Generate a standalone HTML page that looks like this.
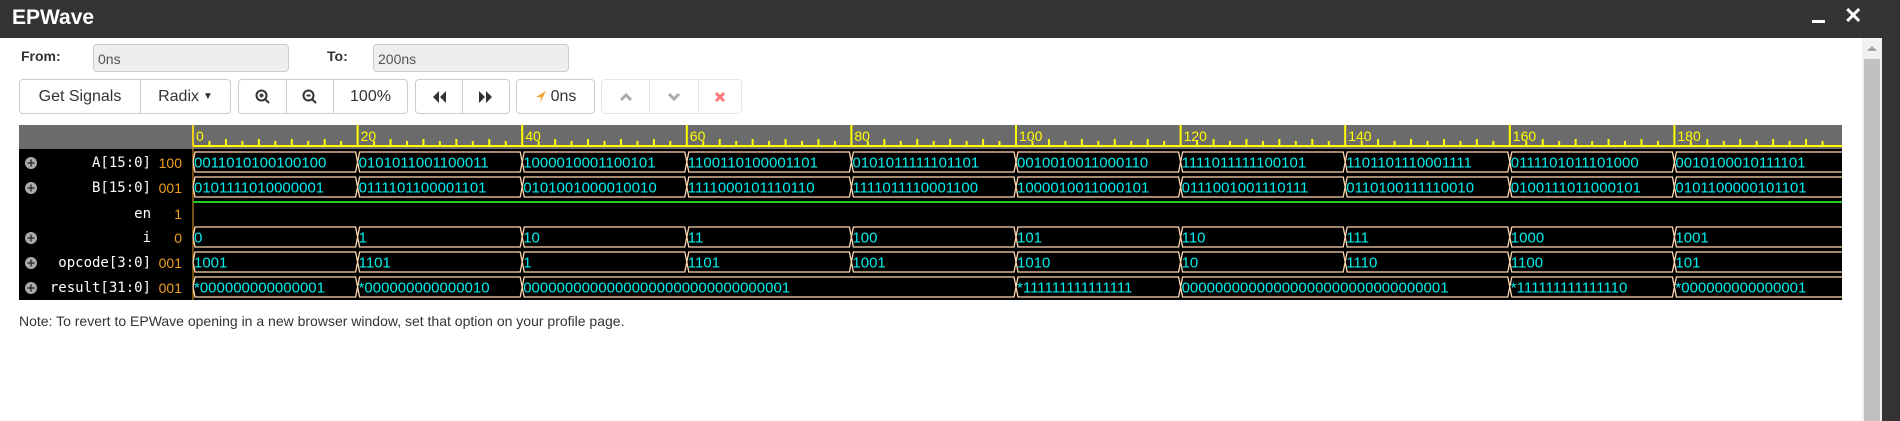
<!DOCTYPE html>
<html><head><meta charset="utf-8"><style>
*{box-sizing:border-box;margin:0;padding:0}
body{width:1900px;height:421px;background:#fff;font-family:"Liberation Sans",Arial,sans-serif;position:relative;overflow:hidden;color:#333}
.title{position:absolute;left:0;top:0;width:1900px;height:38px;background:#333}
.title span{position:absolute;left:12px;top:6px;color:#fff;font-weight:bold;font-size:21px}
.rb{position:absolute;left:1882px;top:0;width:18px;height:421px;background:#333}
.sb{position:absolute;left:1862px;top:38px;width:20px;height:383px;background:#f1f1f1}
.thumb{position:absolute;left:1864px;top:59px;width:16px;height:362px;background:#c1c1c1}
.lbl{position:absolute;font-weight:bold;font-size:14px;color:#333;top:48px}
.inp{position:absolute;top:44px;height:28px;width:196px;background:#eee;border:1px solid #ccc;border-radius:4px;font-size:14px;color:#555;padding:6px 0 0 4px}
.grp{position:absolute;top:79px;height:35px;border:1px solid #ccc;border-radius:4px;display:flex;background:#fff}
.grp div{height:33px;border-right:1px solid #ccc;display:flex;align-items:center;justify-content:center;font-size:16px;color:#333}
.grp div:last-child{border-right:none}
.grp.dis{border-color:#e6e6e6}.grp.dis div{border-color:#e6e6e6}
.note{position:absolute;left:19px;top:313px;font-size:14px;color:#333}
</style></head><body>
<div class="title"><span>EPWave</span>
<div style="position:absolute;left:1812px;top:20px;width:13px;height:3px;background:#fff"></div>
<div style="position:absolute;left:1844px;top:3px;color:#fff;font-size:22px;font-weight:bold">✕</div>
</div>
<div class="rb"></div><div class="sb"></div><div class="thumb"></div>
<div style="position:absolute;left:1867px;top:46px;width:0;height:0;border-left:5px solid transparent;border-right:5px solid transparent;border-bottom:5px solid #a3a3a3"></div>
<div class="lbl" style="left:21px">From:</div>
<div class="inp" style="left:93px">0ns</div>
<div class="lbl" style="left:327px">To:</div>
<div class="inp" style="left:373px">200ns</div>
<div class="grp" style="left:19px;width:212px"><div style="width:121px">Get Signals</div><div style="width:89px">Radix <span style="font-size:10px;margin-left:4px">▼</span></div></div>
<div class="grp" style="left:238px;width:170px">
<div style="width:48px"><svg width="16" height="16" viewBox="0 0 16 16"><circle cx="6.5" cy="6.5" r="5" fill="none" stroke="#333" stroke-width="2"/><path d="M10 10l4 4M4.5 6.5h4M6.5 4.5v4" stroke="#333" stroke-width="2"/></svg></div>
<div style="width:47px"><svg width="16" height="16" viewBox="0 0 16 16"><circle cx="6.5" cy="6.5" r="5" fill="none" stroke="#333" stroke-width="2"/><path d="M10 10l4 4M4.5 6.5h4" stroke="#333" stroke-width="2"/></svg></div>
<div style="width:73px">100%</div></div>
<div class="grp" style="left:415px;width:95px">
<div style="width:47px"><svg width="16" height="14" viewBox="0 0 16 14"><path d="M8 1L2 7l6 6zM15 1L9 7l6 6z" fill="#333"/></svg></div>
<div style="width:46px"><svg width="16" height="14" viewBox="0 0 16 14"><path d="M1 1l6 6-6 6zM8 1l6 6-6 6z" fill="#333"/></svg></div></div>
<div class="grp" style="left:516px;width:79px"><div style="width:77px"><svg width="12" height="14" viewBox="0 0 12 14" style="margin-right:4px"><path d="M11 1L1 7h5l-1 6z" fill="#f0a030"/></svg>0ns</div></div>
<div class="grp dis" style="left:601px;width:141px">
<div style="width:48px"><svg width="14" height="10" viewBox="0 0 14 10"><path d="M2 8l5-5 5 5" fill="none" stroke="#aaa" stroke-width="3"/></svg></div>
<div style="width:49px"><svg width="14" height="10" viewBox="0 0 14 10"><path d="M2 2l5 5 5-5" fill="none" stroke="#aaa" stroke-width="3"/></svg></div>
<div style="width:42px"><svg width="12" height="12" viewBox="0 0 12 12"><path d="M2 2l8 8M10 2l-8 8" stroke="#f77" stroke-width="3"/></svg></div></div>

<svg style="position:absolute;left:0;top:0" width="1900" height="421">
<defs><clipPath id="cp"><rect x="19" y="120" width="1823" height="185"/></clipPath></defs>
<rect x="19" y="125" width="1823" height="24" fill="#6b6b6b"/>
<rect x="19" y="149" width="1823" height="151" fill="#000"/>
<g clip-path="url(#cp)">
<line x1="193" y1="146" x2="1842" y2="146" stroke="#ff0" stroke-width="2"/>
<g stroke="#ff0" stroke-width="2" id="ticks"></g>
<g fill="#ff0" font-size="14" font-family="Liberation Sans" id="nums"></g>
<line x1="193" y1="125" x2="193" y2="300" stroke="#e8a030" stroke-width="1"/>
<line x1="193" y1="202" x2="1842" y2="202" stroke="#2c2" stroke-width="2"/>
<g id="bars" fill="#000" stroke="#ffd8b0" stroke-width="1.3"></g>
<g id="txt" fill="#0ee" font-size="15" font-family="Liberation Sans"></g>
</g>
<g font-family="DejaVu Sans Mono" font-size="14" fill="#fff" text-anchor="end">
<text x="151" y="167">A[15:0]</text><text x="151" y="192">B[15:0]</text><text x="151" y="218">en</text><text x="151" y="242">i</text><text x="151" y="267">opcode[3:0]</text><text x="151" y="292">result[31:0]</text></g>
<g font-family="Liberation Sans" font-size="14" fill="#f0a020" text-anchor="end">
<text x="182" y="168">100</text><text x="182" y="193">001</text><text x="182" y="219">1</text><text x="182" y="243">0</text><text x="182" y="268">001</text><text x="182" y="293">001</text></g>
<g fill="#aaa"><circle cx="31" cy="163" r="6"/><circle cx="31" cy="188" r="6"/><circle cx="31" cy="238" r="6"/><circle cx="31" cy="263" r="6"/><circle cx="31" cy="288" r="6"/></g>
<g stroke="#333" stroke-width="1.5"><path d="M27.5 163h7M31 159.5v7M27.5 188h7M31 184.5v7M27.5 238h7M31 234.5v7M27.5 263h7M31 259.5v7M27.5 288h7M31 284.5v7"/></g>
</svg>
<div class="note">Note: To revert to EPWave opening in a new browser window, set that option on your profile page.</div>
<script>
var NS="http://www.w3.org/2000/svg",W=164.6,X0=193,R=1843;
function el(p,t,a,tx){var e=document.createElementNS(NS,t);for(var k in a)e.setAttribute(k,a[k]);if(tx!=null)e.textContent=tx;document.getElementById(p).appendChild(e);}
for(var i=0;i<100;i++){var x=X0+i*W/10;if(x>R)break;if(i%10==0){el('ticks','line',{x1:x,y1:125,x2:x,y2:146});el('nums','text',{x:x+3,y:141},String(i*2));}else{el('ticks','line',{x1:x,y1:i%2?141:139,x2:x,y2:146});}}
function row(top,segs){for(var j=0;j<segs.length;j++){var s=segs[j],a=X0+s[0]*W,b=s[1]>=10?R+8:X0+s[1]*W,t=top,bo=top+20,m=top+10;
el('bars','polygon',{points:[a,m,a+2,t,b-2,t,b,m,b-2,bo,a+2,bo].join(' ')});el('txt','text',{x:a+1,y:top+15.5},s[2]);}}
function simple(top,v){row(top,v.map(function(s,k){return[k,k+1,s]}));}
simple(152,"0011010100100100 0101011001100011 1000010001100101 1100110100001101 0101011111101101 0010010011000110 1111011111100101 1101101110001111 0111101011101000 0010100010111101".split(' '));
simple(177,"0101111010000001 0111101100001101 0101001000010010 1111000101110110 1111011110001100 1000010011000101 0111001001110111 0110100111110010 0100111011000101 0101100000101101".split(' '));
simple(227,"0 1 10 11 100 101 110 111 1000 1001".split(' '));
simple(252,"1001 1101 1 1101 1001 1010 10 1110 1100 101".split(' '));
row(277,[[0,1,"*000000000000001"],[1,2,"*000000000000010"],[2,5,"00000000000000000000000000000001"],[5,6,"*111111111111111"],[6,8,"00000000000000000000000000000001"],[8,9,"*111111111111110"],[9,10,"*000000000000001"]]);
</script>
</body></html>
